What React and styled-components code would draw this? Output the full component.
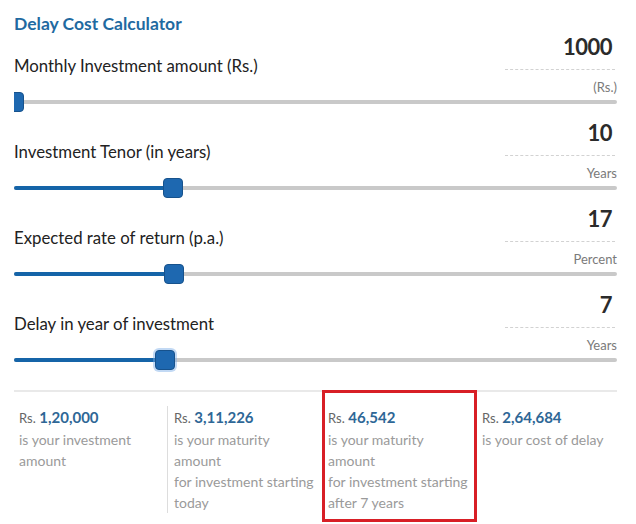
import React from "react";
import styled, { createGlobalStyle } from "styled-components";

const GlobalStyle = createGlobalStyle`
  html, body {
    margin: 0;
    padding: 0;
    background: #ffffff;
  }
  body {
    font-family: Lato, "Open Sans", Arial, sans-serif;
  }
`;

const sliders = [
  { label: "Monthly Investment amount (Rs.)", value: "1000", unit: "(Rs.)", pct: 0 },
  { label: "Investment Tenor (in years)", value: "10", unit: "Years", pct: 26.4 },
  { label: "Expected rate of return (p.a.)", value: "17", unit: "Percent", pct: 26.6 },
  { label: "Delay in year of investment", value: "7", unit: "Years", pct: 25, focused: true },
];

const results = [
  { amount: "1,20,000", lines: ["is your investment", "amount"] },
  { amount: "3,11,226", lines: ["is your maturity", "amount", "for investment starting", "today"], divider: true },
  { amount: "46,542", lines: ["is your maturity", "amount", "for investment starting", "after 7 years"], highlight: true },
  { amount: "2,64,684", lines: ["is your cost of delay"] },
];

function RangeSlider({ pct, focused }) {
  return (
    <SliderRow>
      <Track>
        <Fill style={{ width: `${pct}%` }} />
      </Track>
      <Thumb style={{ left: `${pct}%` }} $focused={focused} />
    </SliderRow>
  );
}

function App() {
  return (
    <Page>
      <GlobalStyle />
      <Title>Delay Cost Calculator</Title>
      {sliders.map(item => (
        <Block key={item.label}>
          <Header>
            <Label>{item.label}</Label>
            <ValueBox>
              <Value>{item.value}</Value>
              <Dashed />
              <Unit>{item.unit}</Unit>
            </ValueBox>
          </Header>
          <RangeSlider pct={item.pct} focused={item.focused} />
        </Block>
      ))}
      <Results>
        {results.map(item => (
          <ResultCol
            key={item.amount}
            $divider={item.divider}
            $highlight={item.highlight}
          >
            <AmountLine>
              <Currency>Rs.</Currency> <Amount>{item.amount}</Amount>
            </AmountLine>
            {item.lines.map(line => (
              <Desc key={line}>{line}</Desc>
            ))}
          </ResultCol>
        ))}
      </Results>
    </Page>
  );
}

export default App;

const Page = styled.div`
  width: 636px;
  box-sizing: border-box;
  padding: 13px 19px 0 14px;
`;

const Title = styled.h1`
  margin: 0;
  font-size: 17.5px;
  line-height: 22px;
  font-weight: 700;
  color: #1f6aa1;
`;

const Block = styled.div`
  padding-bottom: 9px;
`;

const Header = styled.div`
  display: grid;
  grid-template-columns: 1fr 112px;
  height: 61px;
`;

const Label = styled.div`
  align-self: start;
  margin-top: 21px;
  font-size: 16.8px;
  line-height: 20px;
  color: #222222;
`;

const ValueBox = styled.div`
  display: flex;
  flex-direction: column;
`;

const Value = styled.div`
  height: 24px;
  padding-right: 5px;
  text-align: right;
  font-size: 22px;
  line-height: 24px;
  font-weight: 700;
  letter-spacing: -0.5px;
  color: #2b2b2b;
`;

const Dashed = styled.div`
  margin: 10px 2px 0 0;
  border-top: 1px dashed #d2d2d2;
`;

const Unit = styled.div`
  margin-top: 8px;
  text-align: right;
  font-size: 13px;
  line-height: 18px;
  color: #7a7a7a;
`;

const SliderRow = styled.div`
  position: relative;
  height: 20px;
  margin-top: -4px;
  clip-path: inset(-8px 0 -8px 0);
`;

const Track = styled.div`
  position: absolute;
  left: 0;
  right: 0;
  top: 8px;
  height: 4px;
  border-radius: 2px;
  background: #c9c9c9;
`;

const Fill = styled.div`
  height: 100%;
  border-radius: 2px;
  background: #1564a8;
`;

const Thumb = styled.div`
  position: absolute;
  top: 0;
  width: 20px;
  height: 20px;
  box-sizing: border-box;
  transform: translateX(-50%);
  border: 1px solid #17528c;
  border-radius: 4px;
  background: #1e68b0;
  box-shadow: ${props =>
    props.$focused ? "0 0 0 2px rgba(120, 170, 230, 0.45)" : "none"};
`;

const Results = styled.div`
  display: grid;
  grid-template-columns: 153px 155px 155px 1fr;
  align-items: start;
  margin-top: 11px;
  border-top: 2px solid #e9e9e9;
`;

const ResultCol = styled.div`
  box-sizing: border-box;
  padding: 15px 0 0 ${props => (props.$divider ? 6 : 5)}px;
  font-size: 14px;
  line-height: 21px;
  white-space: nowrap;
  ${props =>
    props.$divider &&
    `
    margin-top: 14px;
    padding-top: 1px;
    border-left: 1px solid #dddddd;
  `}
  ${props =>
    props.$highlight &&
    `
    margin-top: -2px;
    padding: 14px 0 6px 3px;
    border: 3px solid #d81f26;
  `}
`;

const AmountLine = styled.div`
  line-height: 21px;
`;

const Currency = styled.span`
  font-size: 13px;
  color: #666666;
`;

const Amount = styled.span`
  font-size: 15px;
  font-weight: 700;
  color: #2e6796;
`;

const Desc = styled.div`
  color: #9a9a9a;
`;
